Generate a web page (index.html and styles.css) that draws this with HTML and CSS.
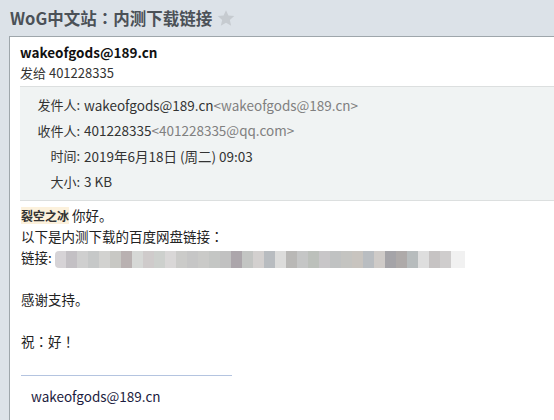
FILE: index.html
```html
<!DOCTYPE html>
<html>
<head>
<meta charset="utf-8">
<link rel="stylesheet" href="styles.css">
</head>
<body>
<div class="page">
  <div class="titlebar">
    <h1 class="title">WoG中文站<span class="punct">：</span>内测下载链接</h1>
    <svg class="star" width="18" height="18" viewBox="0 0 24 24"><path d="M12 1.5l3.2 7.2 7.8.7-5.9 5.2 1.8 7.7L12 18.3l-6.9 4 1.8-7.7L1 9.4l7.8-.7z" fill="#c6cbd0"/></svg>
  </div>
  <div class="card">
    <div class="sender">wakeofgods@189.cn</div>
    <div class="to">发给 401228335</div>
    <div class="meta">
      <div class="row"><span class="lbl">发件人:</span><span class="val">wakeofgods@189.cn<span class="addr">&lt;wakeofgods@189.cn&gt;</span></span></div>
      <div class="row"><span class="lbl">收件人:</span><span class="val">401228335<span class="addr">&lt;401228335@qq.com&gt;</span></span></div>
      <div class="row"><span class="lbl">时间:</span><span class="val">2019年6月18日 (周二) 09:03</span></div>
      <div class="row"><span class="lbl">大小:</span><span class="val">3 KB</span></div>
    </div>
    <div class="body">
      <p><span class="nick">裂空之冰</span> 你好。</p>
      <p>以下是内测下载的百度网盘链接<span class="punct">：</span></p>
      <p>链接: <span class="blur"></span></p>
      <p class="gap">感谢支持。</p>
      <p class="gap">祝<span class="punct">：</span>好<span class="punct">！</span></p>
      <div class="sig">wakeofgods@189.cn</div>
    </div>
  </div>
</div>
</body>
</html>
```
FILE: styles.css
```css
html, body { margin: 0; padding: 0; }
body {
  background: #dce2e8;
  font-family: "Noto Sans CJK SC", "Noto Sans", sans-serif;
  color: #222;
  width: 554px;
  height: 420px;
  overflow: hidden;
}
.page { display: flex; flex-direction: column; height: 420px; }
.punct { font-family: "Noto Sans CJK TC", sans-serif; }
.titlebar {
  display: flex;
  align-items: center;
  height: 36px;
  padding-left: 10px;
  gap: 5px;
}
.title {
  margin: -1px 0 0 0;
  font-size: 16.5px;
  font-weight: bold;
  color: #4b5157;
  line-height: 36px;
}
.star { margin-top: -1px; }
.card {
  flex: 1;
  margin-left: 9px;
  background: #fff;
  border-top: 1px solid #9ea6ab;
  border-left: 1px solid #9ea6ab;
  padding-top: 5px;
}
.sender {
  margin-left: 10px;
  font-size: 13.5px;
  font-weight: bold;
  color: #111;
  line-height: 20px;
}
.to {
  margin-left: 10px;
  font-size: 13px;
  color: #333;
  line-height: 20px;
  margin-top: 1px;
}
.meta {
  margin-top: 3px;
  margin-left: 10px;
  background: #f0f3f3;
  border-top: 1px solid #dcdfdf;
  border-bottom: 1px solid #dcdfdf;
  padding: 5px 0 6px 0;
}
.row {
  display: flex;
  height: 25.5px;
  align-items: center;
  font-size: 13.5px;
  color: #333;
}
.lbl { width: 60px; text-align: right; font-size: 13px; }
.val { margin-left: 4px; }
.addr { color: #808080; }
.body {
  padding: 4px 0 0 11px;
  font-size: 13.5px;
  color: #222;
}
.body p { margin: 0; height: 21px; line-height: 21px; }
.body p.gap { margin-top: 21px; }
.nick {
  background: #fcf1dc;
  font-size: 12px;
  font-weight: bold;
  color: #333;
}
.blur {
  display: inline-block;
  vertical-align: middle;
  width: 460px;
  height: 17px;
  margin-left: 0;
  background: linear-gradient(to right,
    #d6d3d6 0 11px, #c3c0c4 11px 22px, #cfcfcf 22px 33px, #c6c8c8 33px 44px, #d2d2d0 44px 55px,
    #c8c8c4 55px 66px, #b9b1b1 66px 77px, #d6d8d6 77px 88px, #cfcbcb 88px 99px, #cdd0cd 99px 110px,
    #d9d7d7 110px 121px, #cbcbc9 121px 132px, #c6c6c6 132px 143px, #cacac8 143px 154px, #c4c6c4 154px 165px,
    #c1c1c1 165px 176px, #aca6ab 176px 187px, #c3c5c3 187px 198px, #d3d0cf 198px 209px, #b8bcc0 209px 220px,
    #dcdcdb 220px 231px, #b9b8b6 231px 242px, #c5c6c6 242px 253px, #bcc0bb 253px 264px, #c8c6c8 264px 275px,
    #c0c2c2 275px 286px, #c4c4c1 286px 297px, #c8c4bf 297px 308px, #b9bdc1 308px 319px, #cfcbc8 319px 330px,
    #a5a4a8 330px 341px, #aeaaa9 341px 352px, #b7bcbd 352px 363px, #dedede 363px 374px, #c6c3c3 374px 385px,
    #cfcdcd 385px 396px, #f1f1f1 396px 410px, transparent 410px);
  border-radius: 4px;
}
.sig {
  box-sizing: border-box;
  margin-top: 23px;
  width: 211px;
  border-top: 1px solid #b4c4e0;
  padding: 10px 0 0 10px;
  font-size: 13.5px;
  color: #1c1c40;
}
```
